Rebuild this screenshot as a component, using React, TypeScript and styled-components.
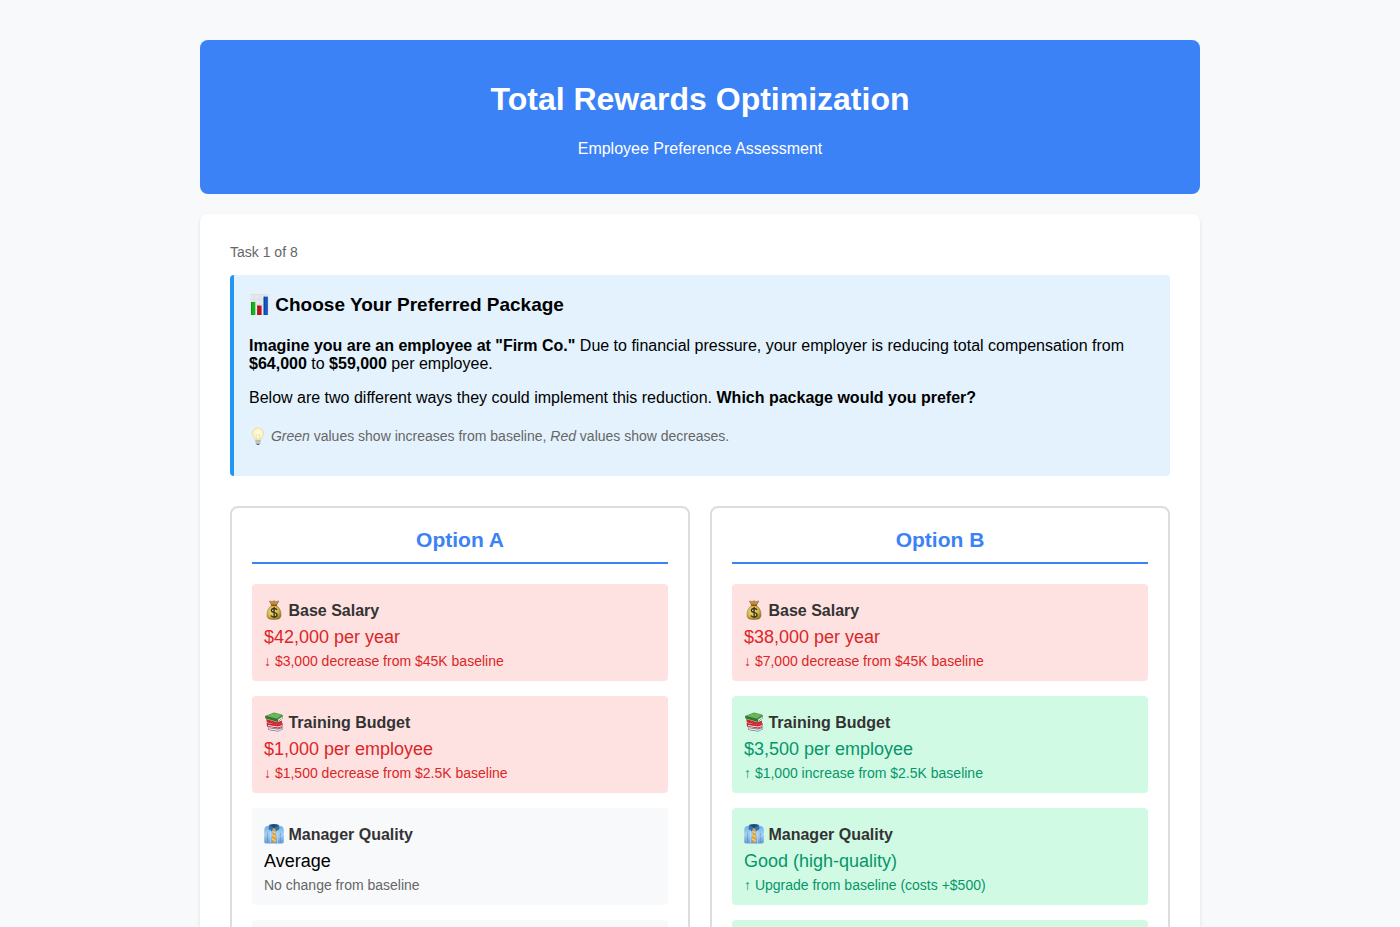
import React from "react";
import styled, { createGlobalStyle } from "styled-components";

type Trend = "down" | "up" | "same";
type IconName = "money" | "books" | "shirt" | "chart" | "bulb";

interface Attribute {
  icon: IconName;
  label: string;
  value: string;
  note: string;
  trend: Trend;
}

const GlobalStyle = createGlobalStyle`
  * { box-sizing: border-box; }
  body {
    margin: 0;
    background: #f8f9fb;
    color: #000;
    font-family: Arial, "Liberation Sans", sans-serif;
    font-size: 16px;
    line-height: 18px;
  }
  h1, h2, h3, p { margin: 0; }
`;

const Page = styled.main`
  max-width: 1040px;
  margin: 0 auto;
  padding: 40px 20px;
`;

const Banner = styled.header`
  padding: 40px 30px 36px;
  border-radius: 8px;
  background: #3b82f6;
  color: #fff;
  text-align: center;
`;

const Title = styled.h1`
  margin-bottom: 22px;
  font-size: 32px;
  line-height: 38px;
`;

const Card = styled.section`
  margin-top: 20px;
  padding: 30px;
  border-radius: 8px;
  background: #fff;
  box-shadow: 0 2px 4px rgba(0, 0, 0, 0.1);
`;

const Progress = styled.p`
  margin-bottom: 15px;
  color: #666;
  font-size: 14px;
  line-height: 16px;
`;

const Scenario = styled.div`
  margin-bottom: 30px;
  padding: 19px 15px 31px;
  border-left: 4px solid #2196f3;
  border-radius: 4px;
  background: #e3f2fd;
`;

const ScenarioTitle = styled.h2`
  margin-bottom: 22px;
  font-size: 19px;
  line-height: 21px;
`;

const Paragraph = styled.p`
  margin-bottom: 16px;
`;

const Hint = styled.p`
  margin-top: 20px;
  color: #666;
  font-size: 14px;
`;

const Options = styled.div`
  display: grid;
  grid-template-columns: repeat(auto-fit, minmax(300px, 1fr));
  gap: 20px;
`;

const Option = styled.article`
  padding: 20px;
  border: 2px solid #ddd;
  border-radius: 8px;
`;

const OptionTitle = styled.h2`
  margin-bottom: 20px;
  padding-bottom: 10px;
  border-bottom: 2px solid #3b82f6;
  color: #3b82f6;
  font-size: 21px;
  line-height: 24px;
  text-align: center;
`;

const AttributeList = styled.div`
  display: flex;
  flex-direction: column;
  gap: 15px;
`;

const fills = { down: "#fee2e2", up: "#d1fae5", same: "#f8f9fb" };
const inks = { down: "#dc2626", up: "#059669", same: "#000" };

const AttributeBox = styled.div<{ $trend: Trend }>`
  min-height: 97px;
  padding: 16px 12px 11px;
  border-radius: 4px;
  background: ${(p) => fills[p.$trend]};
  color: ${(p) => inks[p.$trend]};
`;

const AttributeLabel = styled.h3`
  margin-bottom: 4px;
  color: #333;
  font-size: 16px;
  line-height: 22px;
`;

const AttributeValue = styled.p`
  font-size: 18px;
  line-height: 22px;
`;

const AttributeNote = styled.p<{ $trend: Trend }>`
  margin-top: 4px;
  color: ${(p) => (p.$trend === "same" ? "#666" : "inherit")};
  font-size: 14px;
`;

const Glyph = styled.svg<{ $size: number }>`
  width: ${(p) => p.$size}px;
  height: ${(p) => p.$size}px;
  margin: -2px 0;
  vertical-align: -2px;
`;

const drawings: Record<IconName, React.ReactNode> = {
  chart: (
    <>
      <path d="M1 0h18v20H1z" fill="#e4e9ed" />
      <path d="M1 .5h18M1 5h18M1 10h18M1 15h18M5 0v20M10 0v20M15 0v20" stroke="#d3dce3" strokeWidth=".5" />
      <path d="M2 7.5h4V20H2z" fill="#12b51b" />
      <path d="M8 11h4v9H8z" fill="#c5131c" />
      <path d="M14 2.5h4V20h-4z" fill="#1458c4" />
      <path d="M2 7.5h1V20H2z" fill="#0b9014" />
      <path d="M8 11h1v9H8z" fill="#960c14" />
      <path d="M14 2.5h1V20h-1z" fill="#0d3f9d" />
    </>
  ),
  bulb: (
    <>
      <defs>
        <radialGradient id="bulb-glow" cx=".5" cy=".45" r=".6">
          <stop offset="0" stopColor="#fffef0" />
          <stop offset=".55" stopColor="#fff6c4" />
          <stop offset="1" stopColor="#e6d79d" />
        </radialGradient>
      </defs>
      <path d="M10 .8c-4 0-6.3 2.8-6.3 6.2 0 3.3 2.8 4.7 3.5 8h5.6c.7-3.3 3.5-4.7 3.5-8 0-3.4-2.3-6.2-6.3-6.2z" fill="url(#bulb-glow)" stroke="#d9d3b5" strokeWidth=".5" />
      <path d="M8.8 14 7.6 8l1.6 1 .8-1 .8 1 1.6-1-1.2 6" fill="none" stroke="#f2d487" strokeWidth=".6" />
      <path d="M7.2 14.5h5.6v3.2L11.3 20H8.7l-1.5-2.3z" fill="#a6abb0" />
      <path d="M7.2 15.5h5.6M7.2 17.2h5.6" stroke="#e0e3e5" strokeWidth=".7" />
      <path d="M8.5 19h3l-.6 1H9.1z" fill="#62676b" />
    </>
  ),
  money: (
    <>
      <defs>
        <radialGradient id="sack" cx=".4" cy=".4" r=".65">
          <stop offset="0" stopColor="#f4df75" />
          <stop offset=".65" stopColor="#d4b544" />
          <stop offset="1" stopColor="#947426" />
        </radialGradient>
      </defs>
      <path d="M5.4.9 8 1.7 10 .7l2 1 2.8-.8-2.2 4.5H7.5z" fill="#bd9141" stroke="#80602c" strokeWidth=".5" />
      <path d="M7.3 5.6C4.4 8 3 11.2 3 14.4 3 18 4.3 19.5 10 19.5s7-1.5 7-5.1c0-3.2-1.4-6.4-4.3-8.8z" fill="url(#sack)" stroke="#8b6e2b" strokeWidth=".5" />
      <path d="M7.1 5.3h5.8" stroke="#944e26" strokeWidth="1.5" />
      <path d="M13 9.8c-.6-.9-1.6-1.3-2.8-1.3-1.7 0-2.8.8-2.8 2.1 0 3 5.7 1.2 5.7 4.2 0 1.4-1.2 2.2-2.9 2.2-1.5 0-2.7-.5-3.2-1.6M10.1 7v11.3" fill="none" stroke="#393222" strokeWidth="1.3" />
    </>
  ),
  books: (
    <>
      <path d="m4 15.4 10 1.3 4.5-1.6v2.5l-4.4 2L4.6 18z" fill="#5b4a73" />
      <path d="m4.6 16 9.6 1.4 4-1.4v1.3l-4 1.6-9.4-1.5z" fill="#e9eaf0" />
      <path d="m2.6 11 11.4 1.8 4.6-1.7v3.4l-4.4 1.9-11.2-2z" fill="#c4202a" />
      <path d="m4 13 10 1.6 4.3-1.6v.9L14 15.5 4 13.9z" fill="#f6eeee" />
      <path d="m2.2 7 11.4 3.2L18 8.4v2.8l-4.2 1.8L2.8 10.5z" fill="#cf2a33" />
      <path d="M1 3.9 10 .6l8.6 2.2-4.8 5.9L1.6 6z" fill="#4b9846" />
      <path d="M2.5 3.9 10 1.2l7.3 1.8-4.1 3.4z" fill="#6bb85b" />
      <path d="M1 4.1 13.5 7l5.1-4v3.2L13.8 10 1.6 6.6z" fill="#2f7437" />
      <path d="m14 7.6 4.2-3.2v1.9L14 9.3z" fill="#e3eade" />
    </>
  ),
  shirt: (
    <>
      <defs>
        <linearGradient id="shirt-cloth" x1="0" y1="0" x2="0" y2="1">
          <stop offset="0" stopColor="#6faee4" />
          <stop offset=".5" stopColor="#a5cff2" />
          <stop offset="1" stopColor="#6598d4" />
        </linearGradient>
      </defs>
      <path d="M5.5 1.6 1.8 2.6C.5 3.2.2 5 .2 7v10.5c0 1.3.6 2 1.8 2h16c1.2 0 1.8-.7 1.8-2V7c0-2-.3-3.8-1.6-4.4l-3.7-1z" fill="url(#shirt-cloth)" />
      <path d="M3.5 9v10M16.5 9v10" stroke="#5a8dc8" strokeWidth=".6" />
      <path d="M6.4 5v14M13.6 5v14" stroke="#c4e0fa" strokeWidth=".6" />
      <path d="M5.6.8C8-.2 12-.2 14.4.8l-.5 3L10 5.6 6.1 3.8z" fill="#1c4c7b" />
      <path d="m5.5 1-.7 3.8L7.5 7 10 4.5 12.5 7l2.7-2.2-.7-3.8L10 4.2z" fill="#3474ad" stroke="#225c8e" strokeWidth=".4" />
      <path d="m8.5 4.7 1.5-.7 1.5.7-.5 2 1.5 9.5L10 19.3l-2.5-3.1L9 6.7z" fill="#dca03a" />
      <path d="m8.9 7.4 2.2 1.4M8.3 11l3.5 2.2M8 14.7l3.7 2.3" stroke="#fbe7a8" strokeWidth=".9" />
      <path d="M13.9 10.5h2.6v3h-2.6z" fill="#9ac4ec" />
    </>
  ),
};

function Emoji({ name, size = 20 }: { name: IconName; size?: number }) {
  return (
    <Glyph $size={size} viewBox="0 0 20 20" aria-hidden="true">
      {drawings[name]}
    </Glyph>
  );
}

const packages: { name: string; attributes: Attribute[]; next: Trend }[] = [
  {
    name: "Option A",
    next: "same",
    attributes: [
      { icon: "money", label: "Base Salary", value: "$42,000 per year", note: "↓ $3,000 decrease from $45K baseline", trend: "down" },
      { icon: "books", label: "Training Budget", value: "$1,000 per employee", note: "↓ $1,500 decrease from $2.5K baseline", trend: "down" },
      { icon: "shirt", label: "Manager Quality", value: "Average", note: "No change from baseline", trend: "same" },
    ],
  },
  {
    name: "Option B",
    next: "up",
    attributes: [
      { icon: "money", label: "Base Salary", value: "$38,000 per year", note: "↓ $7,000 decrease from $45K baseline", trend: "down" },
      { icon: "books", label: "Training Budget", value: "$3,500 per employee", note: "↑ $1,000 increase from $2.5K baseline", trend: "up" },
      { icon: "shirt", label: "Manager Quality", value: "Good (high-quality)", note: "↑ Upgrade from baseline (costs +$500)", trend: "up" },
    ],
  },
];

export default function App() {
  return (
    <>
      <GlobalStyle />
      <Page>
        <Banner>
          <Title>Total Rewards Optimization</Title>
          <p>Employee Preference Assessment</p>
        </Banner>
        <Card>
          <Progress>Task 1 of 8</Progress>
          <Scenario>
            <ScenarioTitle>
              <Emoji name="chart" size={21} /> Choose Your Preferred Package
            </ScenarioTitle>
            <Paragraph>
              <strong>Imagine you are an employee at "Firm Co."</strong> Due to financial pressure, your employer is
              reducing total compensation from <strong>$64,000</strong> to <strong>$59,000</strong> per employee.
            </Paragraph>
            <Paragraph>
              Below are two different ways they could implement this reduction.{" "}
              <strong>Which package would you prefer?</strong>
            </Paragraph>
            <Hint>
              <Emoji name="bulb" size={18} /> <em>Green</em> values show increases from baseline, <em>Red</em> values
              show decreases.
            </Hint>
          </Scenario>
          <Options>
            {packages.map((option) => (
              <Option key={option.name}>
                <OptionTitle>{option.name}</OptionTitle>
                <AttributeList>
                  {option.attributes.map((item) => (
                    <AttributeBox key={item.label} $trend={item.trend}>
                      <AttributeLabel>
                        <Emoji name={item.icon} /> {item.label}
                      </AttributeLabel>
                      <AttributeValue>{item.value}</AttributeValue>
                      <AttributeNote $trend={item.trend}>{item.note}</AttributeNote>
                    </AttributeBox>
                  ))}
                  <AttributeBox $trend={option.next} />
                </AttributeList>
              </Option>
            ))}
          </Options>
        </Card>
      </Page>
    </>
  );
}
